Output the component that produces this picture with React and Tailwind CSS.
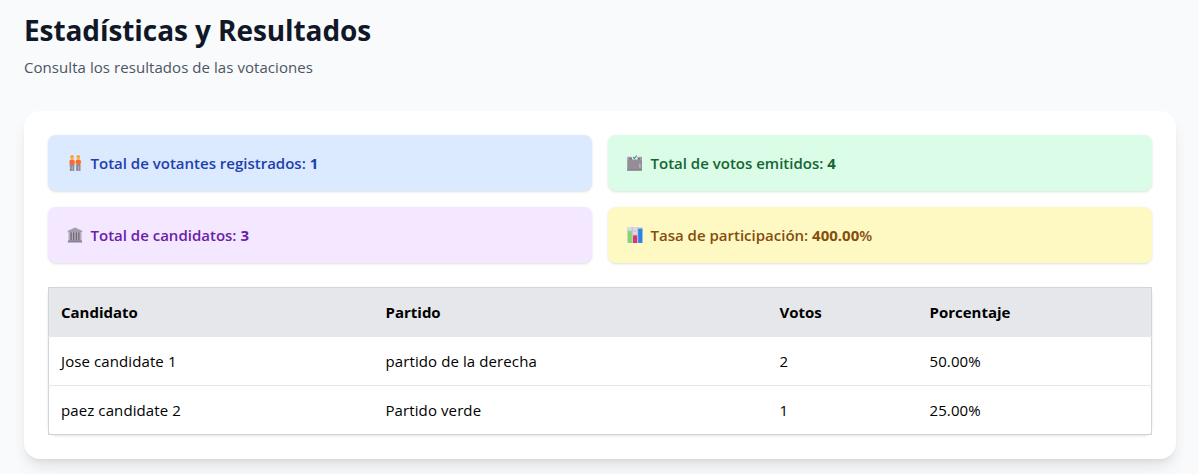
function PeopleIcon() {
  return (
    <svg className="size-4 shrink-0" viewBox="0 0 16 16">
      {[2.2, 8.4].map((x) => (
        <g key={x} transform={`translate(${x} 0)`}>
          <path d="M.7 8.5h4.4v7.4H3.1v-5h-.4v5H.7Z" fill="#93869f" />
          <path d="M1.8 4.4h2.2q1.3.1 1.4 1.5L5.7 8h-.8v1H.9V8H.1l.3-2.1q.1-1.4 1.4-1.5" fill="#fb6a2c" />
          <rect x="0" y="8" width="0.9" height="2.8" fill="#f5b360" />
          <rect x="4.9" y="8" width="0.9" height="2.8" fill="#f5b360" />
          <circle cx="2.9" cy="2.5" r="1.9" fill="#fbb53f" />
          <path d="M1.2 2A1.7 1.7 0 0 1 4.6 2Q2.9 1 1.2 2" fill="#e8961f" />
        </g>
      ))}
    </svg>
  );
}

function BallotIcon() {
  return (
    <svg className="size-4 shrink-0" viewBox="0 0 16 16">
      <rect x="0.2" y="1.8" width="14.8" height="3" fill="#a29da6" />
      <rect x="2.2" y="3.4" width="10.8" height="1.2" fill="#625c69" />
      <rect x="0.2" y="4.6" width="14.8" height="11" rx="0.4" fill="#948e98" />
      <rect x="0.2" y="14.4" width="14.8" height="1.2" fill="#857f8a" />
      <rect x="12.2" y="8.6" width="1.4" height="4.2" fill="#bdb8c0" />
      <path d="M4.4.8 10.2 0 10.8 4.4H5.2Z" fill="#edf0f2" />
      <path d="m6 2.3 1.4 1.2L9.8.6" fill="none" stroke="#20a776" strokeWidth="1.2" />
    </svg>
  );
}

function BuildingIcon() {
  return (
    <svg className="size-4 shrink-0" viewBox="0 0 16 16">
      <path d="M.8 5.2V3.8L8 .4l7.2 3.4v1.4Z" fill="#a49dab" />
      <rect x="1.8" y="5.2" width="12.4" height="8.2" fill="#5b5464" />
      <path d="M2 5h1.6v8.6H2zM4.6 5h1.6v8.6H4.6zM7.2 5h1.6v8.6H7.2zM9.8 5h1.6v8.6H9.8zM12.4 5H14v8.6h-1.6z" fill="#b4adb9" />
      <path d="M1.4 13.2h13.2l.8 2.2H.6Z" fill="#8c8494" />
    </svg>
  );
}

function ChartIcon() {
  return (
    <svg className="size-4 shrink-0" viewBox="0 0 16 16">
      <rect width="16" height="16" rx="0.8" fill="#ded7e5" />
      <path d="M0 4h16M0 8h16M0 12h16M5.3 0v16M10.6 0v16" stroke="#c1b9ca" strokeWidth="0.7" />
      <rect x="0.9" y="4.2" width="3.9" height="11.8" fill="#7ddb65" />
      <rect x="6" y="8.4" width="4.1" height="7.6" fill="#e32d75" />
      <rect x="11.2" y="1.6" width="4.1" height="14.4" fill="#2786df" />
    </svg>
  );
}

const stats = [
  { Icon: PeopleIcon, label: "Total de votantes registrados:", value: "1", tone: "bg-blue-100 text-[#1e40af]" },
  { Icon: BallotIcon, label: "Total de votos emitidos:", value: "4", tone: "bg-green-100 text-[#166534]" },
  { Icon: BuildingIcon, label: "Total de candidatos:", value: "3", tone: "bg-purple-100 text-[#6b21a8]" },
  { Icon: ChartIcon, label: "Tasa de participación:", value: "400.00", suffix: "%", tone: "bg-yellow-100 text-[#854d0e]" },
];

const rows = [
  ["Jose candidate 1", "partido de la derecha", "2", "50.00%"],
  ["paez candidate 2", "Partido verde", "1", "25.00%"],
];

export default function App() {
  return (
    <main className="h-[474px] overflow-hidden bg-[#f9fafb] pt-3 pr-[22px] pl-6 font-['Open_Sans','Noto_Sans',sans-serif] text-[15px] leading-6 text-black">
      <h1 className="text-[28px] leading-9 font-bold tracking-[-0.08px] text-gray-900">Estadísticas y Resultados</h1>
      <p className="mt-[7px] tracking-[0.06px] text-[#4b5563]">Consulta los resultados de las votaciones</p>
      <section className="mt-8 rounded-2xl bg-white p-6 shadow-lg">
        <div className="mb-6 grid grid-cols-2 gap-4">
          {stats.map(({ Icon, label, value, suffix, tone }) => (
            <div key={label} className={`flex h-14 items-center gap-2 rounded-lg pr-4 pl-[18.5px] font-semibold shadow-sm ${tone}`}>
              <Icon />
              <span>
                {label} <strong className="font-bold">{value}</strong>{suffix}
              </span>
            </div>
          ))}
        </div>
        <table className="w-full table-fixed border-collapse rounded-lg border border-gray-300 text-left shadow-sm">
          <colgroup>
            <col className="w-[325px]" />
            <col className="w-[394px]" />
            <col className="w-[150px]" />
            <col />
          </colgroup>
          <thead className="bg-gray-200">
            <tr>
              {["Candidato", "Partido", "Votos", "Porcentaje"].map((h) => (
                <th key={h} className="p-3 font-bold">{h}</th>
              ))}
            </tr>
          </thead>
          <tbody>
            {rows.map((row) => (
              <tr key={row[0]} className="border-t border-gray-200 tracking-[0.1px]">
                {row.map((cell, i) => (
                  <td key={i} className="p-3">{cell}</td>
                ))}
              </tr>
            ))}
          </tbody>
        </table>
      </section>
    </main>
  );
}
